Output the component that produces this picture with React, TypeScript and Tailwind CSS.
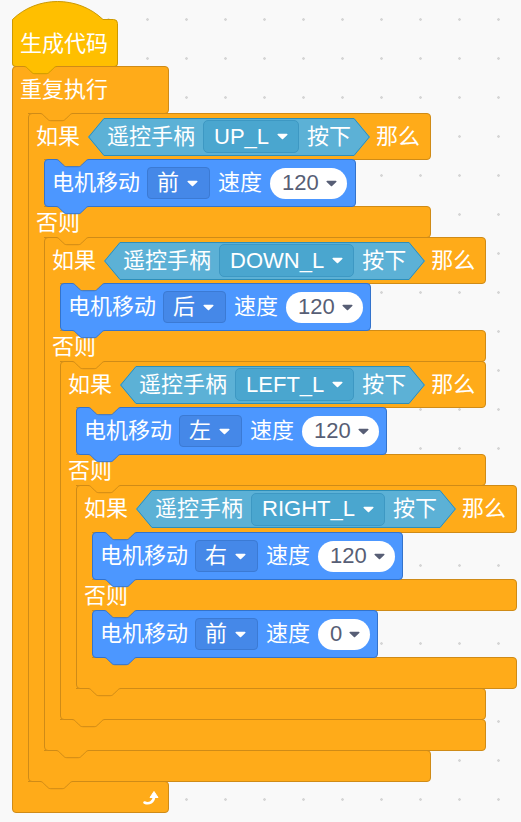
import type { ReactNode } from "react";

const ORANGE = "#ffab19";
const ORANGE_DARK = "#cf8b17";
const BLUE = "#4c97ff";
const BLUE_DARK = "#3373cc";
const TEAL = "#5cb1d6";
const TEAL_DARK = "#2e8eb8";
const YELLOW = "#ffbf00";
const YELLOW_DARK = "#cc9900";

// puzzle notch, 33 wide, ~8 deep
const NOTCH =
  "C1.8 0.5 2.7 1.4 3.6 2.3 L7.2 5.9 C8.1 6.8 9 7.7 10.8 7.7 H22.2 C24 7.7 24.9 6.8 25.8 5.9 L29.4 2.3 C30.3 1.4 31.2 0.5 33 0.5";

function Notch({ fill, stroke, bottom = false }: { fill: string; stroke: string; bottom?: boolean }) {
  return (
    <svg
      width="33"
      height="9"
      viewBox="0 0 33 9"
      className={bottom ? "absolute left-[11px] top-full z-10" : "absolute -top-px left-[11px] z-10"}
    >
      <path d={`M0 0 L0 0.5 ${NOTCH} L33 0 Z`} fill={fill} />
      <path d={`M0 0.5 ${NOTCH}`} fill="none" stroke={stroke} />
    </svg>
  );
}

function Caret({ color }: { color: string }) {
  return (
    <svg width="11" height="7" viewBox="0 0 11 7" className="shrink-0">
      <path
        d="M1.2 0.8 H9.8 C10.5 0.8 10.8 1.6 10.3 2.1 L6.1 6.1 C5.8 6.4 5.2 6.4 4.9 6.1 L0.7 2.1 C0.2 1.6 0.5 0.8 1.2 0.8 Z"
        fill={color}
      />
    </svg>
  );
}

function LoopIcon() {
  return (
    <svg width="18" height="17" viewBox="0 0 18 17">
      <path d="M2.5 13.5 C7 15.5 12 13 12 7.5" fill="none" stroke="#fff" strokeWidth="2.6" strokeLinecap="round" />
      <path d="M8 8.5 L12 2.5 L16 8.5 Z" fill="#fff" strokeLinejoin="round" stroke="#fff" strokeWidth="1" />
    </svg>
  );
}

function Field({ children }: { children: ReactNode }) {
  return (
    <div className="flex h-[32px] items-center gap-2 rounded-[4px] border border-[#3b7ad4] bg-[#4588e8] pl-[9px] pr-[11px]">
      <span>{children}</span>
      <Caret color="#fff" />
    </div>
  );
}

function NumberPill({ value }: { value: string }) {
  return (
    <div className="flex h-[31px] items-center gap-[7px] rounded-full bg-white pl-[12px] pr-[10px] text-[#575e75]">
      <span>{value}</span>
      <Caret color="#575e75" />
    </div>
  );
}

function MotorBlock({ dir, speed, className }: { dir: string; speed: string; className: string }) {
  return (
    <div
      className={`relative z-[2] flex h-[48px] items-center gap-2 rounded-[4px] border border-[#3373cc] bg-[#4c97ff] pl-[7px] ${className}`}
    >
      <Notch fill={ORANGE} stroke={BLUE_DARK} />
      <span className="-mr-px">电机移动</span>
      <Field>{dir}</Field>
      <span>速度</span>
      <NumberPill value={speed} />
      <Notch fill={BLUE} stroke={BLUE_DARK} bottom />
    </div>
  );
}

function SensingBool({ button }: { button: string }) {
  return (
    <div className="flex h-[38px] shrink-0">
      <svg width="16" height="38" viewBox="0 0 16 38" className="shrink-0">
        <path d="M16 0 L0 19 L16 38 Z" fill={TEAL} />
        <path d="M16 0.5 L0.7 19 L16 37.5" fill="none" stroke={TEAL_DARK} />
      </svg>
      <div className="flex items-center gap-2 border-y border-[#2e8eb8] bg-[#5cb1d6] px-[3px]">
        <span>遥控手柄</span>
        <div className="flex h-[33px] items-center gap-2 rounded-[5px] border border-[#3d98c3] bg-[#4aa6cf] px-[10px]">
          <span>{button}</span>
          <Caret color="#fff" />
        </div>
        <span>按下</span>
      </div>
      <svg width="16" height="38" viewBox="0 0 16 38" className="shrink-0">
        <path d="M0 0 L16 19 L0 38 Z" fill={TEAL} />
        <path d="M0 0.5 L15.3 19 L0 37.5" fill="none" stroke={TEAL_DARK} />
      </svg>
    </div>
  );
}

function Mouth({ children }: { children: ReactNode }) {
  return (
    <div className="-mt-px flex">
      <div className="relative z-[1] w-4 shrink-0 border-l border-[#cf8b17] bg-[#ffab19]" />
      <div className="flex flex-col items-start bg-[linear-gradient(to_right,#ffab19_6px,transparent_6px)]">
        {children}
      </div>
    </div>
  );
}

function IfElse({
  button,
  width,
  tall = false,
  then,
  otherwise,
}: {
  button: string;
  width: string;
  tall?: boolean;
  then: ReactNode;
  otherwise: ReactNode;
}) {
  return (
    <div className="relative z-[2] flex flex-col items-start">
      <div
        className={`relative flex ${tall ? "h-[48px]" : "h-[47px]"} items-center rounded-tl-[4px] rounded-r-[4px] border border-[#cf8b17] bg-[#ffab19] pl-[7px] ${width}`}
      >
        <Notch fill={ORANGE} stroke={ORANGE_DARK} />
        <span className="mr-2">如果</span>
        <SensingBool button={button} />
        <span className="ml-[6px]">那么</span>
      </div>
      <Mouth>{then}</Mouth>
      <div
        className={`relative -mt-px flex h-[32px] items-center rounded-r-[4px] border border-[#cf8b17] bg-[#ffab19] pl-[7px] ${width}`}
      >
        <span className="pt-[2px]">否则</span>
      </div>
      <Mouth>{otherwise}</Mouth>
      <div
        className={`relative -mt-px h-[32px] rounded-tr-[4px] rounded-b-[4px] border border-[#cf8b17] bg-[#ffab19] ${width}`}
      >
        <Notch fill={ORANGE} stroke={ORANGE_DARK} bottom />
      </div>
    </div>
  );
}

function Forever({ children }: { children: ReactNode }) {
  return (
    <div className="relative -mt-px flex flex-col items-start">
      <div className="relative flex h-[48px] w-[157px] items-center rounded-tl-[4px] rounded-r-[4px] border border-[#cf8b17] bg-[#ffab19] pl-[7px]">
        <span>重复执行</span>
      </div>
      <Mouth>{children}</Mouth>
      <div className="relative -mt-px flex h-[32px] w-[157px] items-center justify-end rounded-tr-[4px] rounded-b-[4px] border border-[#cf8b17] bg-[#ffab19] pr-[8px]">
        <LoopIcon />
      </div>
    </div>
  );
}

function Hat() {
  return (
    <div className="flex w-[106px] flex-col">
      <svg width="106" height="24" viewBox="0 0 106 24" className="block">
        <path
          d="M0.5 24 V19.5 C25 -4.5 66 -4.5 91 19.5 H101.5 A4 4 0 0 1 105.5 23.5 V24"
          fill={YELLOW}
          stroke={YELLOW_DARK}
        />
      </svg>
      <div className="relative flex h-[43px] items-center rounded-b-[4px] border-x border-b border-[#cc9900] bg-[#ffbf00] pb-[3px] pl-[7px]">
        <span>生成代码</span>
        <Notch fill={YELLOW} stroke={YELLOW_DARK} bottom />
      </div>
    </div>
  );
}

export default function App() {
  return (
    <div className="min-h-[822px] w-full bg-[#f9f9f9] bg-[radial-gradient(circle,#d6d6d6_1px,transparent_1.6px)] bg-[length:39px_39px] bg-[position:11px_0px] pl-3 font-['Liberation_Sans','Noto_Sans_CJK_SC',sans-serif] text-[22px] leading-none text-white">
      <div className="flex flex-col items-start">
        <Hat />
        <Forever>
          <IfElse
            button="UP_L"
            width="w-[403px]"
            then={<MotorBlock dir="前" speed="120" className="w-[312px]" />}
            otherwise={
              <IfElse
                button="DOWN_L"
                width="w-[442px]"
                then={<MotorBlock dir="后" speed="120" className="w-[311px]" />}
                otherwise={
                  <IfElse
                    button="LEFT_L"
                    width="w-[426px]"
                    then={<MotorBlock dir="左" speed="120" className="w-[311px]" />}
                    otherwise={
                      <IfElse
                        button="RIGHT_L"
                        width="w-[441px]"
                        tall
                        then={<MotorBlock dir="右" speed="120" className="w-[311px]" />}
                        otherwise={<MotorBlock dir="前" speed="0" className="w-[286px]" />}
                      />
                    }
                  />
                }
              />
            }
          />
        </Forever>
      </div>
    </div>
  );
}
